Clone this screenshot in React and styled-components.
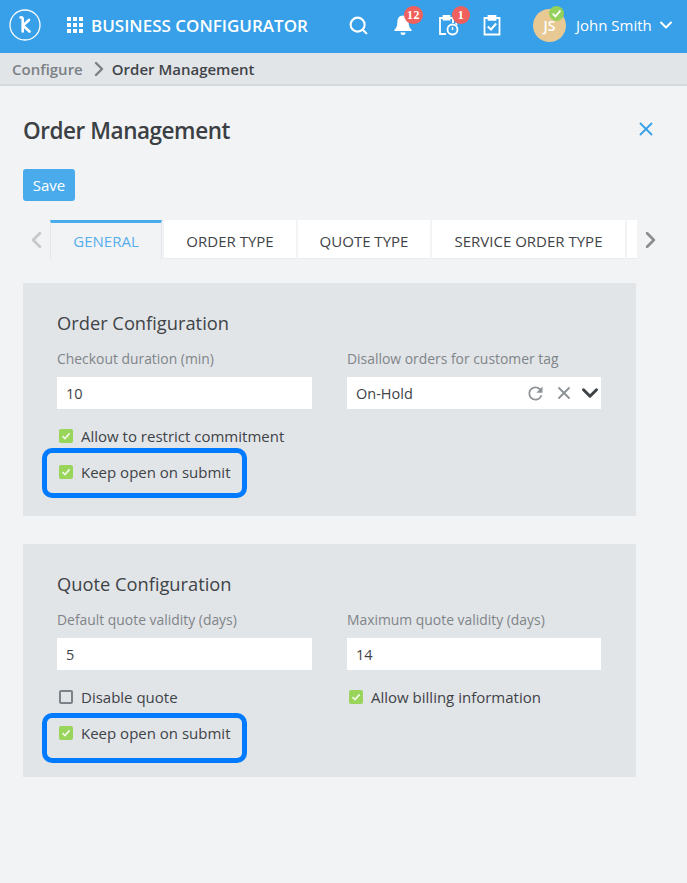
import styled, { createGlobalStyle } from "styled-components";
import { FiSearch, FiChevronDown, FiChevronLeft, FiChevronRight, FiX } from "react-icons/fi";
import { MdRefresh } from "react-icons/md";

const GlobalStyle = createGlobalStyle`
  html, body { margin: 0; padding: 0; background: #f2f3f5; }
  body { font-family: "Open Sans", "Liberation Sans", sans-serif; color: #3e4347; }
  *, *::after { box-sizing: border-box; }
`;

const Page = styled.div`
  width: 687px;
  height: 883px;
  overflow: hidden;
  background: #f2f3f5;
`;

const TopBar = styled.header`
  height: 53px;
  background: #38a0e8;
  display: flex;
  align-items: center;
  color: #fff;
  padding: 0 0 3px 9px;
`;

const Logo = styled.svg`
  width: 32px;
  height: 32px;
  margin-right: 26px;
`;

const AppTitle = styled.div`
  font-size: 17px;
  font-weight: 600;
  margin-left: 8px;
  width: 257px;
  white-space: nowrap;
`;

const Grid = styled.div`
  display: grid;
  grid-template-columns: repeat(3, 4px);
  grid-auto-rows: 4px;
  gap: 2px;
`;

const Dot = styled.i`
  background: #fff;
  display: block;
`;

const IconSlot = styled.div`
  position: relative;
  width: ${(p) => p.$w}px;
  height: 24px;
  display: flex;
  align-items: center;
`;

const Badge = styled.span`
  position: absolute;
  top: -7px;
  left: ${(p) => p.$left}px;
  height: 18px;
  min-width: 18px;
  padding: 0 3px;
  border-radius: 9px;
  background: #f0605c;
  color: #fff;
  font-family: "Liberation Serif", serif;
  font-size: 12px;
  font-weight: 700;
  line-height: 18px;
  text-align: center;
  letter-spacing: 0.5px;
`;

const Avatar = styled.div`
  position: relative;
  width: 33px;
  height: 33px;
  border-radius: 50%;
  background: #e8c994;
  font-size: 14px;
  font-weight: 600;
  line-height: 34px;
  text-align: center;
  margin-right: 10px;
`;

const OnlineDot = styled.span`
  position: absolute;
  top: -3px;
  right: 2px;
  width: 15px;
  height: 15px;
  border-radius: 50%;
  background: #93d15a;
  display: flex;
  align-items: center;
  justify-content: center;
`;

const UserName = styled.span`
  font-size: 15px;
  margin-right: 4px;
  white-space: nowrap;
`;

const Crumbs = styled.nav`
  height: 33px;
  background: #e2e5e8;
  border-bottom: 2px solid #d6d9dc;
  display: flex;
  align-items: center;
  padding-left: 12px;
  font-size: 15px;
  font-weight: 600;
  color: #7b8084;
`;

const CrumbArrow = styled(FiChevronRight)`
  margin: 0 0 0 4px;
`;

const CrumbCurrent = styled.span`
  color: #3f4448;
  margin-left: 1px;
`;

const Body = styled.main`
  padding: 0 23px;
`;

const TitleRow = styled.div`
  display: flex;
  align-items: center;
  justify-content: space-between;
  padding: 6px 7px 0 0;
  height: 83px;
`;

const Title = styled.h1`
  margin: 0;
  font-size: 22.500px;
  font-weight: 600;
  letter-spacing: -0.450px;
  color: #3b4044;
`;

const CloseIcon = styled(FiX)`
  color: #38a0e8;
  margin-bottom: 4px;
`;

const SaveButton = styled.button`
  display: block;
  width: 52px;
  height: 32px;
  border: none;
  border-radius: 3px;
  background: #4aabec;
  color: #fff;
  font: 400 15px "Open Sans", sans-serif;
  padding: 0;
`;

const TabStrip = styled.div`
  display: flex;
  align-items: stretch;
  height: 39px;
  margin-top: 19px;
  width: 641px;
`;

const Arrow = styled.div`
  width: 27px;
  display: flex;
  align-items: center;
  justify-content: center;
  color: ${(p) => p.$right ? "#8a8e91" : "#c6c8ca"};
`;

const Tabs = styled.div`
  display: flex;
  gap: 2px;
  width: 587px;
  overflow: hidden;
`;

const Tab = styled.div`
  flex: 0 0 ${(p) => p.$w}px;
  display: flex;
  align-items: center;
  justify-content: center;
  font-size: 15px;
  white-space: nowrap;
  background: ${(p) => p.$active ? "#f2f3f5" : "#fff"};
  color: ${(p) => p.$active ? "#55aeee" : "#3e4347"};
  border-top: 3px solid ${(p) => p.$active ? "#4aabec" : "transparent"};
  border-left: ${(p) => p.$active ? "1px solid #e4e6e9" : "none"};
  border-right: ${(p) => p.$active ? "1px solid #e4e6e9" : "none"};
  border-bottom: ${(p) => p.$active ? "none" : "1px solid #e9ebed"};
`;

const Panel = styled.section`
  width: 613px;
  height: 233px;
  margin-top: ${(p) => p.$top}px;
  background: #e2e5e8;
  padding: 28px 34px 0;
`;

const PanelTitle = styled.h2`
  margin: 0 0 14px;
  font-size: 18.300px;
  line-height: 24px;
  font-weight: 400;
  color: #3e4347;
`;

const FieldGrid = styled.div`
  display: grid;
  grid-template-columns: 255px 254px;
  column-gap: 35px;
`;

const Field = styled.div`
  height: 77px;
`;

const FieldLabel = styled.div`
  font-size: 13.900px;
  line-height: 20px;
  color: #7f8488;
  margin-bottom: 8px;
  white-space: nowrap;
`;

const Input = styled.div`
  height: 32px;
  background: #fff;
  padding-left: 9px;
  font-size: 14.500px;
  line-height: 33px;
  color: #3e4347;
  display: flex;
  align-items: center;
`;

const SelectActions = styled.div`
  margin: 0 -2px 0 auto;
  display: flex;
  align-items: center;
  gap: 3px;
  color: #8d9296;
`;

const RefreshIcon = styled(MdRefresh)`
  margin-right: 5px;
`;

const CheckRow = styled.label`
  position: relative;
  display: flex;
  align-items: center;
  gap: 8px;
  height: 20px;
  margin-bottom: 16px;
  padding-left: 2px;
  font-size: 15px;
  color: #3e4347;
  white-space: nowrap;
  ${(p) => p.$mark && `
    &::after {
      content: "";
      position: absolute;
      left: -15px;
      top: ${p.$mark}px;
      width: 205px;
      height: 50px;
      border: 5px solid #007bff;
      border-radius: 10px;
    }
  `}
`;

const Box = styled.span`
  width: 14px;
  height: 14px;
  border-radius: 2px;
  background: ${(p) => p.$on ? "#99d45b" : "transparent"};
  border: ${(p) => p.$on ? "none" : "2px solid #7c8388"};
  display: flex;
  align-items: center;
  justify-content: center;
  flex: none;
`;

const Check = ({ size = 10, color = "#f2f8ea" }) => (
  <svg width={size} height={size} viewBox="0 0 10 10" fill="none">
    <path d="M1.500 5.200 4 7.600 8.600 2.400" stroke={color} strokeWidth="1.600" />
  </svg>
);

const CheckItem = ({ on, mark, children }) => (
  <CheckRow $mark={mark}>
    <Box $on={on}>{on && <Check />}</Box>
    {children}
  </CheckRow>
);

const BellIcon = () => (
  <svg width="20" height="22" viewBox="0 0 20 22" fill="#fff">
    <path d="M10 1.500c-3.600 0-5.600 2.800-5.600 6.200 0 4.400-1.200 6.400-3 8v1.300h17.200v-1.300c-1.800-1.600-3-3.600-3-8 0-3.400-2-6.200-5.600-6.200z" />
    <path d="M7.500 18.500h5a2.500 2.500 0 0 1-5 0z" />
  </svg>
);

const ClipboardTimer = () => (
  <svg width="24" height="24" viewBox="0 0 24 24" fill="none" stroke="#fff" strokeWidth="1.800">
    <path d="M8 21H2V5h4M11 5h4v5" />
    <path d="M5.500 3h6v3.500h-6z" fill="#fff" />
    <circle cx="14.500" cy="16.500" r="5" fill="#38a0e8" />
    <path d="M14.500 14v3" strokeWidth="1.500" />
    <path d="M17.500 10l1.800 1.800" strokeWidth="1.500" />
  </svg>
);

const ClipboardCheck = () => (
  <svg width="18" height="22" viewBox="0 0 18 22" fill="none" stroke="#fff" strokeWidth="1.800">
    <path d="M5 4H1.500v16.500h15V4H13" />
    <path d="M5.500 1.800h7v4h-7z" fill="#fff" />
    <path d="M4.800 12.500 8 15.500l5.200-6" strokeWidth="2" />
  </svg>
);

export default function App() {
  return (
    <Page>
      <GlobalStyle />
      <TopBar>
        <Logo viewBox="0 0 32 32" fill="none" stroke="#fff">
          <circle cx="16" cy="16" r="15" strokeWidth="1.300" />
          <path d="M11.500 8.500c1.300-.6 2.200 0 2.200 1.500v12.500" strokeWidth="2.600" strokeLinecap="round" />
          <path d="M20 11l-6 5.500 6.500 6" strokeWidth="2.600" strokeLinecap="round" strokeLinejoin="round" />
        </Logo>
        <Grid>
          {Array.from({ length: 9 }).map((_, i) => <Dot key={i} />)}
        </Grid>
        <AppTitle>BUSINESS CONFIGURATOR</AppTitle>
        <IconSlot $w={45}><FiSearch size={21} strokeWidth={2.400} /></IconSlot>
        <IconSlot $w={45}><BellIcon /><Badge $left={11}>12</Badge></IconSlot>
        <IconSlot $w={45}><ClipboardTimer /><Badge $left={14}>1</Badge></IconSlot>
        <IconSlot $w={50}><ClipboardCheck /></IconSlot>
        <Avatar>JS<OnlineDot><Check size={11} color="#fff" /></OnlineDot></Avatar>
        <UserName>John Smith</UserName>
        <FiChevronDown size={20} strokeWidth={2.400} />
      </TopBar>
      <Crumbs>
        Configure
        <CrumbArrow size={24} strokeWidth={2.400} />
        <CrumbCurrent>Order Management</CrumbCurrent>
      </Crumbs>
      <Body>
        <TitleRow>
          <Title>Order Management</Title>
          <CloseIcon size={22} strokeWidth={2} />
        </TitleRow>
        <SaveButton>Save</SaveButton>
        <TabStrip>
          <Arrow><FiChevronLeft size={28} strokeWidth={2.400} /></Arrow>
          <Tabs>
            <Tab $w={112} $active>GENERAL</Tab>
            <Tab $w={132}>ORDER TYPE</Tab>
            <Tab $w={132}>QUOTE TYPE</Tab>
            <Tab $w={193}>SERVICE ORDER TYPE</Tab>
            <Tab $w={60} />
          </Tabs>
          <Arrow $right><FiChevronRight size={28} strokeWidth={2.400} /></Arrow>
        </TabStrip>
        <Panel $top={24}>
          <PanelTitle>Order Configuration</PanelTitle>
          <FieldGrid>
            <Field>
              <FieldLabel>Checkout duration (min)</FieldLabel>
              <Input>10</Input>
            </Field>
            <Field>
              <FieldLabel>Disallow orders for customer tag</FieldLabel>
              <Input>
                On-Hold
                <SelectActions>
                  <RefreshIcon size={21} />
                  <FiX size={20} strokeWidth={2.200} />
                  <FiChevronDown size={26} strokeWidth={2.800} color="#3e4347" />
                </SelectActions>
              </Input>
            </Field>
          </FieldGrid>
          <CheckItem on>Allow to restrict commitment</CheckItem>
          <CheckItem on mark={-14}>Keep open on submit</CheckItem>
        </Panel>
        <Panel $top={28}>
          <PanelTitle>Quote Configuration</PanelTitle>
          <FieldGrid>
            <Field>
              <FieldLabel>Default quote validity (days)</FieldLabel>
              <Input>5</Input>
            </Field>
            <Field>
              <FieldLabel>Maximum quote validity (days)</FieldLabel>
              <Input>14</Input>
            </Field>
            <CheckItem>Disable quote</CheckItem>
            <CheckItem on>Allow billing information</CheckItem>
            <CheckItem on mark={-10}>Keep open on submit</CheckItem>
          </FieldGrid>
        </Panel>
      </Body>
    </Page>
  );
}
